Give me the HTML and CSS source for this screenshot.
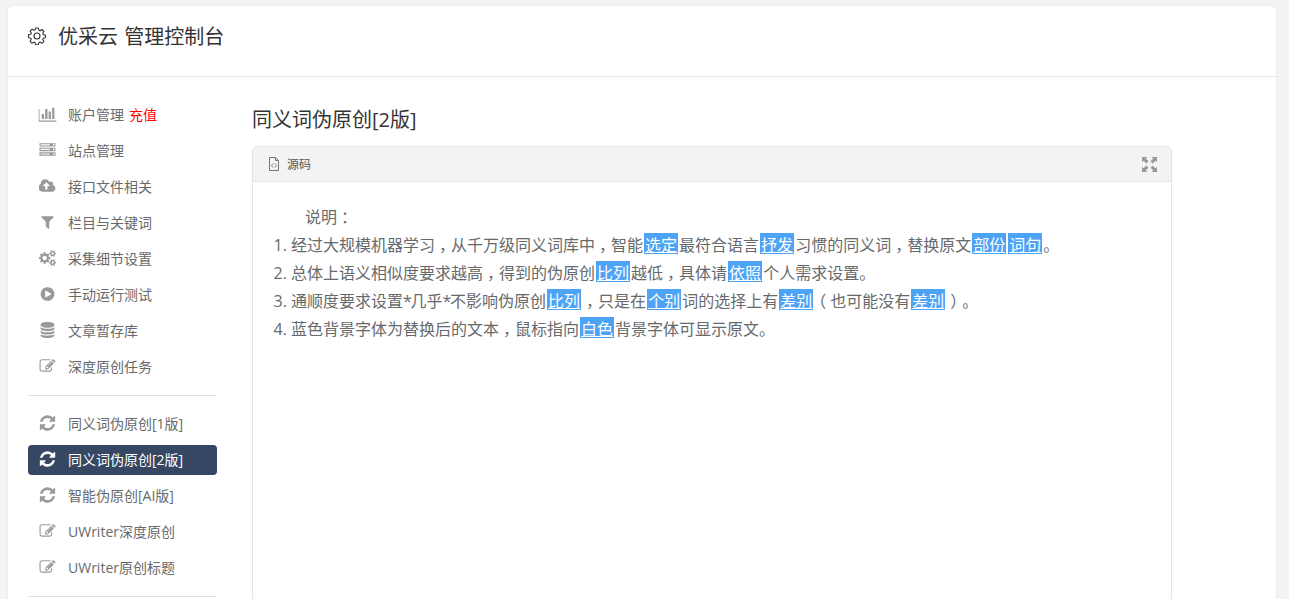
FILE: index.html
```html
<!DOCTYPE html>
<html lang="zh-CN">
<head>
<meta charset="utf-8">
<title>优采云 管理控制台</title>
<link rel="stylesheet" href="styles.css">
</head>
<body>
<svg class="defs" aria-hidden="true">
<symbol id="i-chart" viewBox="0 0 2048 1792"><path d="M640 896v512h-256v-512h256zm384-512v1024h-256v-1024h256zm1024 1152v128h-2048v-1280h128v1152h1920zm-640-896v768h-256v-768h256zm384-384v1152h-256v-1152h256z"/></symbol>
<symbol id="i-server" viewBox="0 0 1792 1792"><path d="M128 1408h1024v-128h-1024v128zm0-512h1024v-128h-1024v128zm1568 448q0-40-28-68t-68-28-68 28-28 68 28 68 68 28 68-28 28-68zm-1568-960h1024v-128h-1024v128zm1568 448q0-40-28-68t-68-28-68 28-28 68 28 68 68 28 68-28 28-68zm0-512q0-40-28-68t-68-28-68 28-28 68 28 68 68 28 68-28 28-68zm96 832v384h-1792v-384h1792zm0-512v384h-1792v-384h1792zm0-512v384h-1792v-384h1792z"/></symbol>
<symbol id="i-cloud" viewBox="0 0 1920 1792"><path d="M1216 864q0-14-9-23l-352-352q-9-9-23-9t-23 9l-351 351q-10 12-10 24 0 14 9 23t23 9h224v352q0 13 9.500 22.500t22.500 9.500h192q13 0 22.500-9.500t9.500-22.500v-352h224q13 0 22.500-9.500t9.500-22.500zm640 288q0 159-112.500 271.500t-271.500 112.500h-1088q-185 0-316.500-131.500t-131.500-316.500q0-130 70-240t188-165q-2-30-2-43 0-212 150-362t362-150q156 0 285.500 87t188.500 231q71-62 166-62 106 0 181 75t75 181q0 76-41 138 130 31 213.500 135.500t83.500 238.500z"/></symbol>
<symbol id="i-filter" viewBox="0 0 1792 1792"><path d="M1595 295q17 41-14 70l-493 493v742q0 42-39 59-13 5-25 5-27 0-45-19l-256-256q-19-19-19-45v-486l-493-493q-31-29-14-70 17-39 59-39h1280q42 0 59 39z"/></symbol>
<symbol id="i-cogs" viewBox="0 0 1920 1792"><path d="M896 896q0-106-75-181t-181-75-181 75-75 181 75 181 181 75 181-75 75-181zm768 512q0-52-38-90t-90-38-90 38-38 90q0 53 37.500 90.500t90.500 37.500 90.500-37.500 37.500-90.500zm0-1024q0-52-38-90t-90-38-90 38-38 90q0 53 37.500 90.500t90.500 37.500 90.500-37.500 37.500-90.500zm-384 421v185q0 10-7 19.500t-16 10.500l-155 24q-11 35-32 76 34 48 90 115 7 11 7 20 0 12-7 19-23 30-82.500 89.500t-78.500 59.500q-11 0-21-7l-115-90q-37 19-77 31-11 108-23 155-7 24-30 24h-186q-11 0-20-7.500t-10-17.500l-23-153q-34-10-75-31l-118 89q-7 7-20 7-11 0-21-8-144-133-144-160 0-9 7-19 10-14 41-53t47-61q-23-44-35-82l-152-24q-10-1-17-9.500t-7-19.500v-185q0-10 7-19.500t16-10.500l155-24q11-35 32-76-34-48-90-115-7-11-7-20 0-12 7-20 22-30 82-89t79-59q11 0 21 7l115 90q34-18 77-32 11-108 23-154 7-24 30-24h186q11 0 20 7.500t10 17.500l23 153q34 10 75 31l118-89q8-7 20-7 11 0 21 8 144 133 144 160 0 8-7 19-12 16-42 54t-45 60q23 48 34 82l152 23q10 2 17 10.500t7 19.500zm640 533v140q0 16-149 31-12 27-30 52 51 113 51 138 0 4-4 7-122 71-124 71-8 0-46-47t-52-68q-20 2-30 2t-30-2q-14 21-52 68t-46 47q-2 0-124-71-4-3-4-7 0-25 51-138-18-25-30-52-149-15-149-31v-140q0-16 149-31 13-29 30-52-51-113-51-138 0-4 4-7 4-2 35-20t59-34 30-16q8 0 46 46.500t52 67.500q20-2 30-2t30 2q51-71 92-112l6-2q4 0 124 70 4 3 4 7 0 25-51 138 17 23 30 52 149 15 149 31zm0-1024v140q0 16-149 31-12 27-30 52 51 113 51 138 0 4-4 7-122 71-124 71-8 0-46-47t-52-68q-20 2-30 2t-30-2q-14 21-52 68t-46 47q-2 0-124-71-4-3-4-7 0-25 51-138-18-25-30-52-149-15-149-31v-140q0-16 149-31 13-29 30-52-51-113-51-138 0-4 4-7 4-2 35-20t59-34 30-16q8 0 46 46.500t52 67.500q20-2 30-2t30 2q51-71 92-112l6-2q4 0 124 70 4 3 4 7 0 25-51 138 17 23 30 52 149 15 149 31z"/></symbol>
<symbol id="i-play" viewBox="0 0 1792 1792"><path d="M896 128q209 0 385.500 103t279.500 279.500 103 385.500-103 385.500-279.500 279.500-385.500 103-385.500-103-279.500-279.500-103-385.500 103-385.500 279.500-279.500 385.500-103zm384 823q32-18 32-55t-32-55l-544-320q-31-19-64-1-32 19-32 56v640q0 37 32 56 16 8 32 8 17 0 32-9z"/></symbol>
<symbol id="i-db" viewBox="0 0 1792 1792"><path d="M896 768q237 0 443-43t325-127v170q0 69-103 128t-280 93.500-385 34.500-385-34.500-280-93.500-103-128v-170q119 84 325 127t443 43zm0 768q237 0 443-43t325-127v170q0 69-103 128t-280 93.500-385 34.500-385-34.500-280-93.500-103-128v-170q119 84 325 127t443 43zm0-384q237 0 443-43t325-127v170q0 69-103 128t-280 93.500-385 34.500-385-34.500-280-93.500-103-128v-170q119 84 325 127t443 43zm0-1152q208 0 385 34.500t280 93.500 103 128v128q0 69-103 128t-280 93.500-385 34.500-385-34.500-280-93.500-103-128v-128q0-69 103-128t280-93.500 385-34.500z"/></symbol>
<symbol id="i-edit" viewBox="0 0 1792 1792"><path d="M888 1184l116-116-152-152-116 116v56h96v96h56zm440-720q-16-16-33 1l-350 350q-17 17-1 33t33-1l350-350q17-17 1-33zm80 594v190q0 119-84.500 203.500t-203.500 84.500h-832q-119 0-203.500-84.500t-84.500-203.500v-832q0-119 84.500-203.500t203.500-84.500h832q63 0 117 25 15 7 18 23 3 17-9 29l-49 49q-14 14-32 8-23-6-45-6h-832q-66 0-113 47t-47 113v832q0 66 47 113t113 47h832q66 0 113-47t47-113v-126q0-13 9-22l64-64q15-15 35-7t20 29zm-96-738l288 288-672 672h-288v-288zm444 132l-92 92-288-288 92-92q28-28 68-28t68 28l152 152q28 28 28 68t-28 68z"/></symbol>
<symbol id="i-refresh" viewBox="0 0 1792 1792"><path d="M1639 1056q0 5-1 7-64 268-268 434.500t-478 166.500q-146 0-282.500-55t-243.500-157l-129 129q-19 19-45 19t-45-19-19-45v-448q0-26 19-45t45-19h448q26 0 45 19t19 45-19 45l-137 137q71 66 161 102t187 36q134 0 250-65t186-179q11-17 53-117 8-23 30-23h192q13 0 22.500 9.500t9.500 22.500zm25-800v448q0 26-19 45t-45 19h-448q-26 0-45-19t-19-45 19-45l138-138q-148-137-349-137-134 0-250 65t-186 179q-11 17-53 117-8 23-30 23h-199q-13 0-22.500-9.500t-9.500-22.500v-7q65-268 270-434.500t480-166.500q146 0 284 55.500t245 156.500l130-129q19-19 45-19t45 19 19 45z"/></symbol>
</svg>
<div class="card">
  <header class="top">
    <svg class="gear" viewBox="0 0 18 18"><path d="M7.600 1h2.800l.4 2.100 1.300.6 1.800-1.200 2 2-1.200 1.800.6 1.300 2.100.4v2.800l-2.100.4-.6 1.300 1.200 1.800-2 2-1.800-1.200-1.300.6-.4 2.100H7.600l-.4-2.100-1.300-.6-1.800 1.200-2-2 1.200-1.800-.6-1.300-2.100-.4V7.600l2.100-.4.600-1.300-1.200-1.800 2-2 1.800 1.200 1.300-.6z"/><circle cx="9" cy="9" r="3"/></svg>
    <h1>优采云 管理控制台</h1>
  </header>
  <div class="body">
    <nav class="side">
      <ul class="group">
        <li class="item"><svg class="ico chart"><use href="#i-chart"/></svg><span>账户管理<b class="recharge">充值</b></span></li>
        <li class="item"><svg class="ico"><use href="#i-server"/></svg><span>站点管理</span></li>
        <li class="item"><svg class="ico"><use href="#i-cloud"/></svg><span>接口文件相关</span></li>
        <li class="item"><svg class="ico"><use href="#i-filter"/></svg><span>栏目与关键词</span></li>
        <li class="item"><svg class="ico"><use href="#i-cogs"/></svg><span>采集细节设置</span></li>
        <li class="item"><svg class="ico"><use href="#i-play"/></svg><span>手动运行测试</span></li>
        <li class="item"><svg class="ico"><use href="#i-db"/></svg><span>文章暂存库</span></li>
        <li class="item"><svg class="ico"><use href="#i-edit"/></svg><span>深度原创任务</span></li>
      </ul>
      <ul class="group">
        <li class="item"><svg class="ico big"><use href="#i-refresh"/></svg><span>同义词伪原创[1版]</span></li>
        <li class="item active"><svg class="ico big"><use href="#i-refresh"/></svg><span>同义词伪原创[2版]</span></li>
        <li class="item"><svg class="ico big"><use href="#i-refresh"/></svg><span>智能伪原创[AI版]</span></li>
        <li class="item"><svg class="ico"><use href="#i-edit"/></svg><span>UWriter深度原创</span></li>
        <li class="item"><svg class="ico"><use href="#i-edit"/></svg><span>UWriter原创标题</span></li>
      </ul>
    </nav>
    <main class="main">
      <h2>同义词伪原创[2版]</h2>
      <section class="panel">
        <div class="toolbar">
          <span class="source">
            <svg class="file" viewBox="0 0 12 14"><path d="M1.500 .5h6l3 3v10h-9z"/><path d="M7.500 .5v3h3M5 6.500 3.500 8.500 5 10.500M7 6.500l1.500 2-1.500 2"/></svg>
            源码
          </span>
          <svg class="expand" viewBox="0 0 14 14"><path d="M0 0h5L3.500 1.500 6 4 4 6 1.500 3.500 0 5zM14 0v5l-1.500-1.500L10 6 8 4l2.500-2.500L9 0zM0 14V9l1.500 1.500L4 8l2 2-2.500 2.500L5 14zM14 14H9l1.500-1.500L8 10l2-2 2.500 2.500L14 9z"/></svg>
        </div>
        <div class="content">
          <p class="indent">说明<span class="p">：</span></p>
          <ol>
            <li>经过大规模机器学习<span class="p">，</span>从千万级同义词库中<span class="p">，</span>智能<u>选定</u>最符合语言<u>抒发</u>习惯的同义词<span class="p">，</span>替换原文<u>部份</u><u>词句</u>。</li>
            <li>总体上语义相似度要求越高<span class="p">，</span>得到的伪原创<u>比列</u>越低<span class="p">，</span>具体请<u>依照</u>个人需求设置。</li>
            <li>通顺度要求设置<span class="star">*</span>几乎<span class="star">*</span>不影响伪原创<u>比列</u><span class="p">，</span>只是在<u>个别</u>词的选择上有<u>差别</u><span class="p">（</span>也可能没有<u>差别</u><span class="p">）</span>。</li>
            <li>蓝色背景字体为替换后的文本<span class="p">，</span>鼠标指向<u>白色</u>背景字体可显示原文。</li>
          </ol>
        </div>
      </section>
    </main>
  </div>
</div>
</body>
</html>
```
FILE: styles.css
```css
* { box-sizing: border-box; }
html, body { height: 100%; overflow: hidden; }
body {
  margin: 0;
  padding: 6px 13px 0 8px;
  background: #f3f3f4;
  font-family: "Open Sans", "Noto Sans CJK SC", sans-serif;
  color: #676a6c;
}
.defs { position: absolute; width: 0; height: 0; }
.card {
  background: #fff;
  border-radius: 5px;
  height: 800px;
  box-shadow: 0 0 2px rgba(0,0,0,.08);
}
.top {
  height: 71px;
  border-bottom: 1px solid #e7e7e7;
  display: flex;
  align-items: center;
  padding: 0 0 8px 20px;
  gap: 12px;
}
.gear {
  width: 18px;
  height: 18px;
  margin-bottom: 2px;
  fill: none;
  stroke: #333;
  stroke-width: 1.1;
  stroke-linejoin: round;
}
h1, h2 { margin: 0; font-weight: 400; font-size: 20px; color: #333; }
h1 { line-height: 30px; word-spacing: 1px; }
.body { display: flex; padding: 19px 0 0 20px; }
.side { width: 189px; flex: none; }
.group {
  list-style: none;
  margin: 0 0 12px;
  padding: 0 0 8px;
  border-bottom: 1px solid #e2e2e2;
}
.item {
  height: 30px;
  margin: 3px 0 6px;
  border-radius: 4px;
  display: flex;
  align-items: center;
  padding-left: 11px;
  font-size: 14px;
  color: #676a6c;
  gap: 12px;
}
.ico { width: 17px; height: 16px; fill: #999; flex: none; }
.big { transform: scale(1.12); }
.chart { transform: scale(1.08, 1.2); }
.active {
  background: #354763;
  color: #fff;
  margin: 7px 0 5px;
  padding-bottom: 2px;
}
.active .ico { fill: #fff; }
.recharge { font-weight: 400; color: #f00; margin-left: 5px; }
.main { width: 920px; margin-left: 35px; }
h2 { line-height: 30px; margin: 9px 0 11px; }
.panel {
  border: 1px solid #e6e6e6;
  border-radius: 5px 5px 0 0;
  height: 600px;
}
.toolbar {
  height: 35px;
  background: #f3f3f3;
  border-bottom: 1px solid #e6e6e6;
  border-radius: 5px 5px 0 0;
  display: flex;
  align-items: center;
  justify-content: space-between;
  padding: 0 14px 0 15px;
}
.source { display: flex; align-items: center; gap: 7px; font-size: 12px; color: #555; }
.file { width: 12px; height: 14px; fill: none; stroke: #777; stroke-width: 1; }
.expand { width: 15px; height: 15px; fill: #999; }
.content { padding: 21px 0 0 20px; font-size: 16px; line-height: 28px; color: #676a6c; }
.indent { margin: 0 0 0 32px; }
ol { margin: 0; padding: 0 0 0 18px; }
u {
  background: linear-gradient(#4da3f5, #4da3f5) 0 0 / 100% 21px no-repeat;
  color: #fff;
  padding: 1px 1px 0;
  margin: 0 1px;
}
.p { font-feature-settings: "halt"; padding: 0 4px; }
.star { letter-spacing: -1.3px; }
```
